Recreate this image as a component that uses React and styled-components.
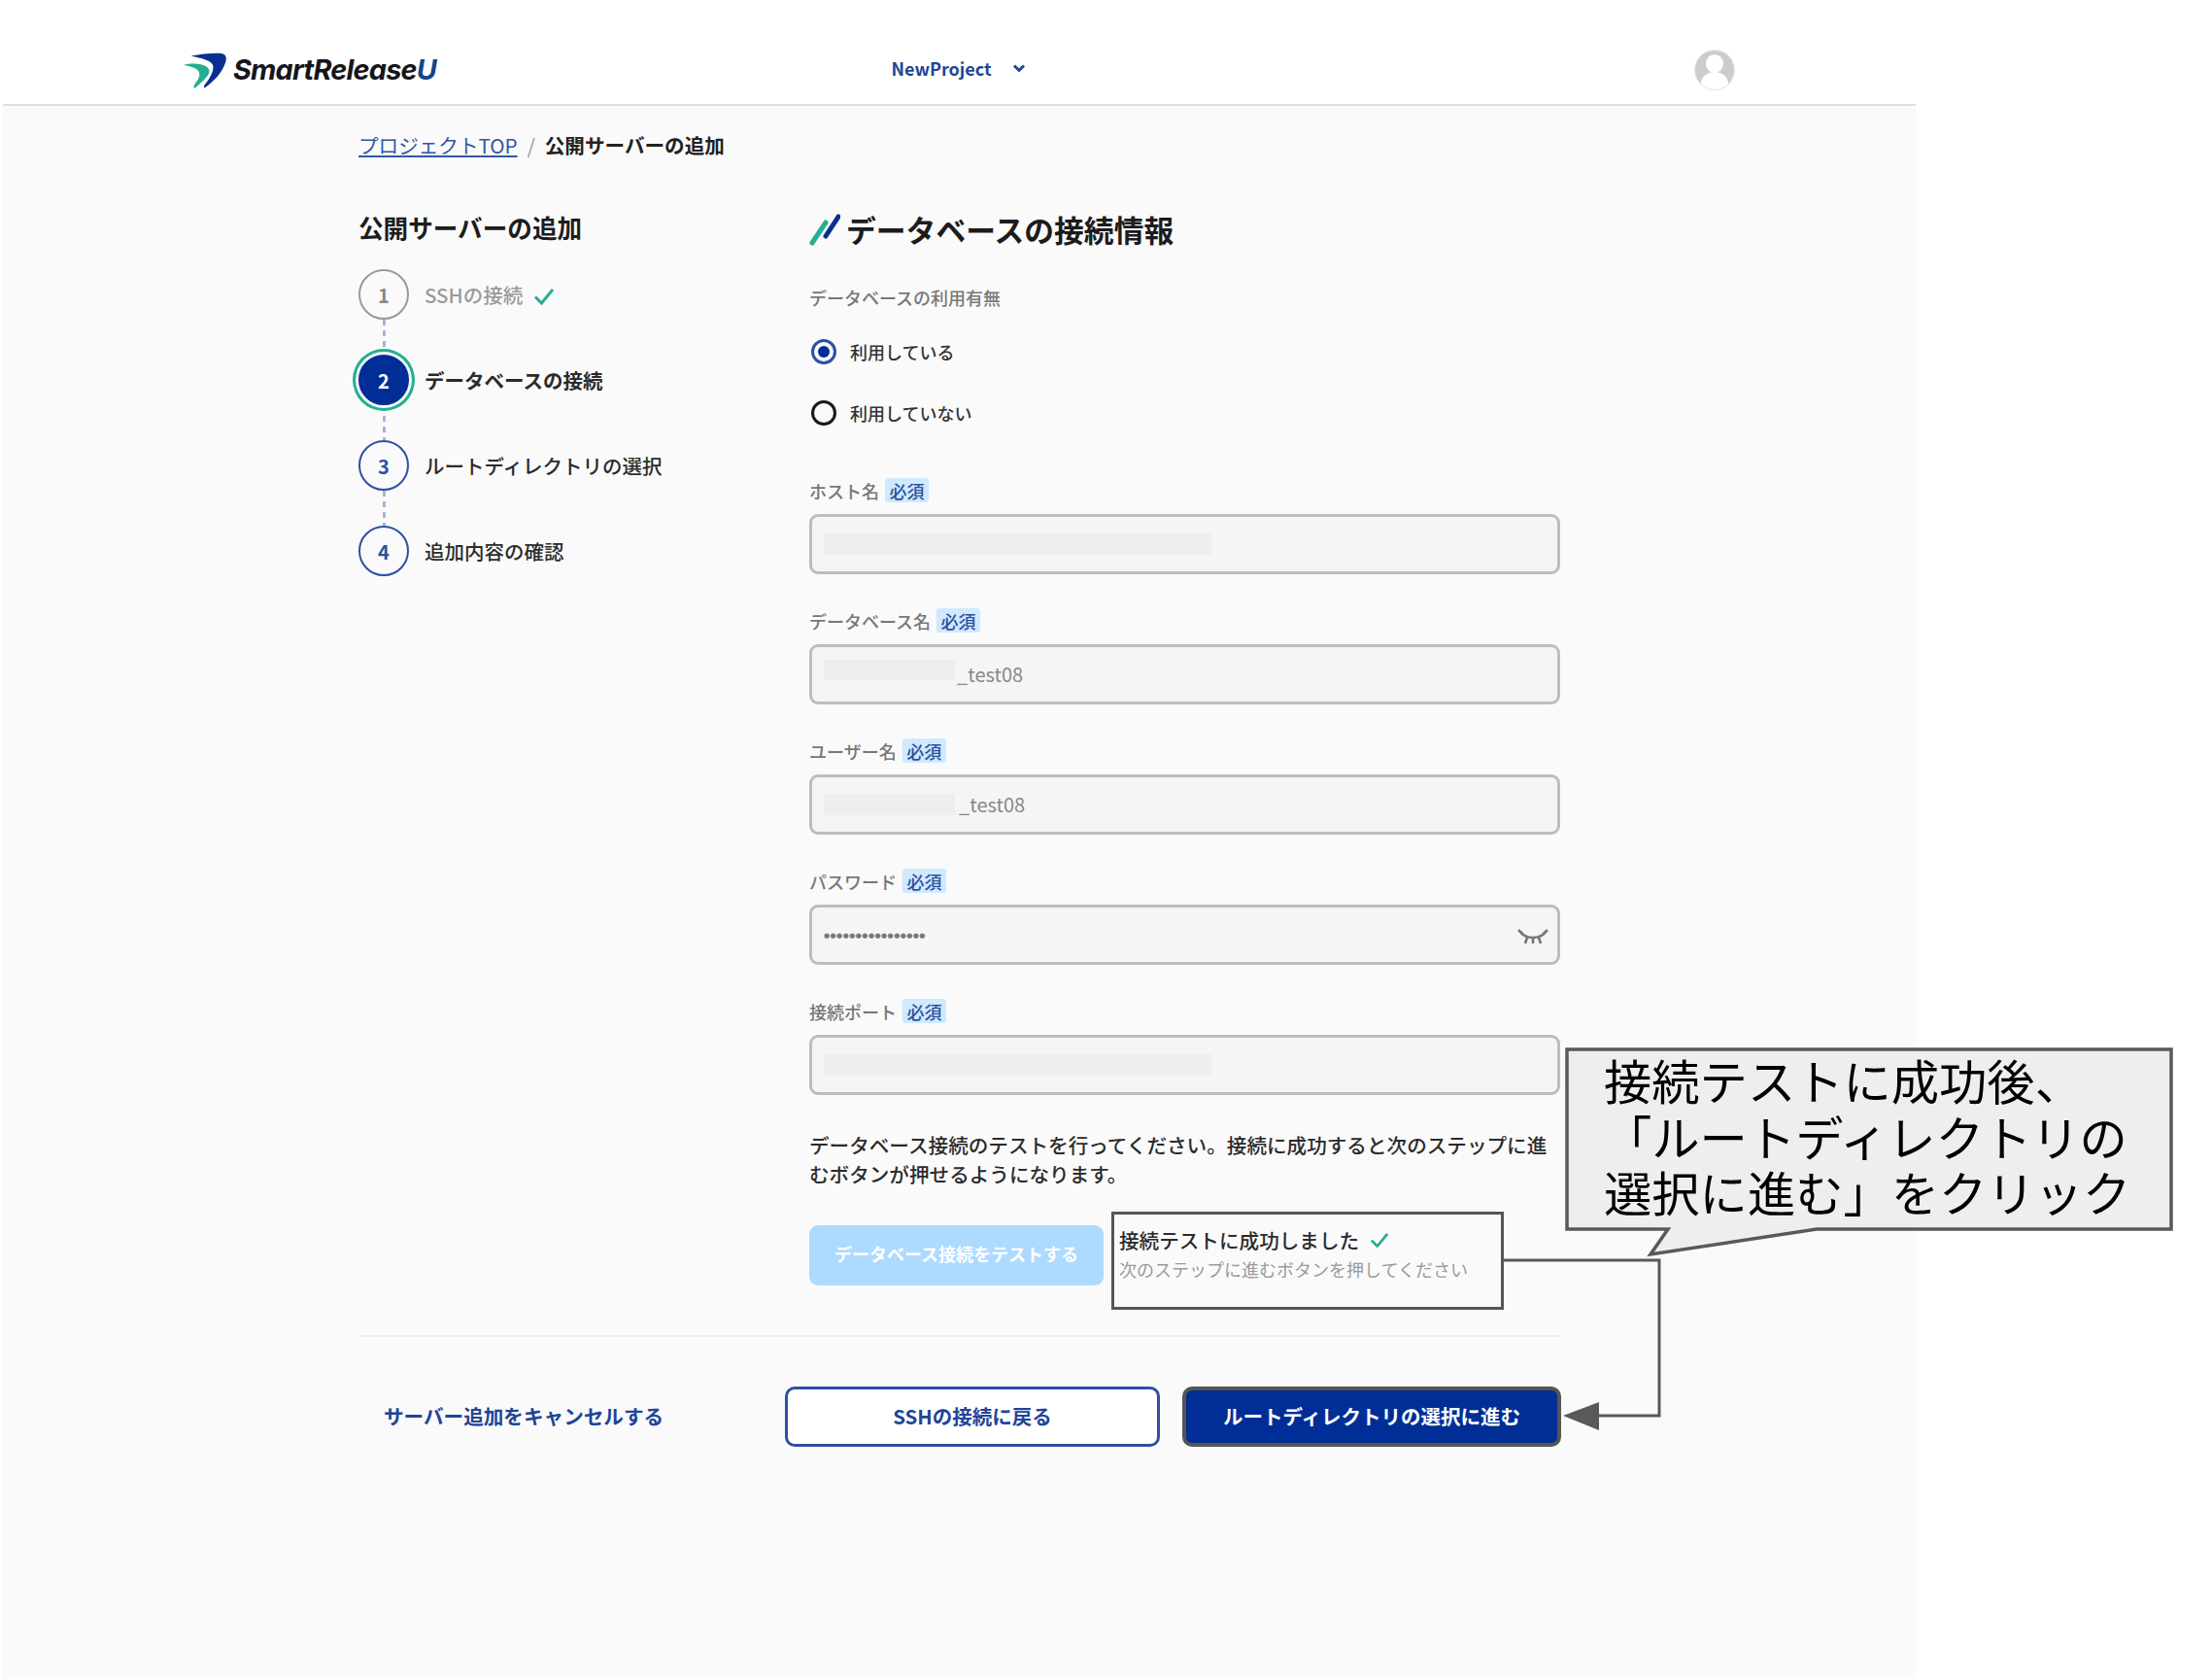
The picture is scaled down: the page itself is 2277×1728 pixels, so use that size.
import React from "react";
import styled, { createGlobalStyle } from "styled-components";

const Global = createGlobalStyle`
  html, body { margin: 0; padding: 0; background: #fff; }
  body { font-family: "Noto Sans CJK JP", "Noto Sans", sans-serif; color: #222; }
  * { box-sizing: border-box; }
`;

const Canvas = styled.div`
  position: relative;
  width: 2277px;
  height: 1728px;
  overflow: hidden;
  background: #fff;
`;
const Shell = styled.div`
  width: 1969px;
  height: 1728px;
  margin-left: 3px;
  background: #fafafa;
`;
const Header = styled.header`
  height: 109px;
  padding: 38px 186px 0;
  display: flex;
  align-items: center;
  background: #fff;
  border-bottom: 2px solid #dedede;
`;
const Logo = styled.div`
  display: flex;
  align-items: center;
  gap: 7px;
  width: 729px;
`;
const LogoText = styled.span`
  font-family: Inter, "Liberation Sans", sans-serif;
  font-style: italic;
  font-weight: 700;
  font-size: 28.8px;
  line-height: 1;
  letter-spacing: -0.75px;
  color: #15161a;
`;
const LogoU = styled.span`
  color: #12458f;
`;
const ProjectSelect = styled.div`
  display: flex;
  align-items: center;
  gap: 21px;
  width: 826px;
  margin-top: -5px;
  font-size: 18px;
  font-weight: 700;
  color: #1f4597;
`;
const Avatar = styled.svg`
  margin: -2px 0 0 1px;
`;
const Main = styled.main`
  width: 1238px;
  margin-left: 366px;
`;
const Breadcrumb = styled.nav`
  display: flex;
  align-items: center;
  height: 30px;
  margin-top: 25px;
  font-size: 20.6px;
  line-height: 30px;
`;
const CrumbLink = styled.a`
  color: #2f57a5;
  text-decoration: underline;
`;
const CrumbSep = styled.span`
  margin: 0 10px;
  color: #999;
`;
const CrumbNow = styled.span`
  font-weight: 700;
`;
const Columns = styled.div`
  display: grid;
  grid-template-columns: 464px 773px;
  margin-top: 52px;
`;
const SideTitle = styled.h2`
  margin: 0 0 25px;
  font-size: 25.6px;
  line-height: 36px;
  font-weight: 700;
  color: #1c1c1c;
`;
const Step = styled.div`
  display: flex;
  align-items: center;
  gap: 16px;
  height: 52px;
  font-size: 20.5px;
  font-weight: ${(p) => (p.$active ? 700 : 500)};
  color: ${(p) => (p.$done ? "#9a9a9a" : "#2b2b2b")};
`;
const StepNumber = styled.span`
  position: relative;
  z-index: 1;
  flex: none;
  width: 52px;
  height: 52px;
  display: flex;
  align-items: center;
  justify-content: center;
  border-radius: 50%;
  font-size: 20px;
  font-weight: 700;
  border: 2.5px solid ${(p) => (p.$done ? "#9a9a9a" : "#2d50a0")};
  color: ${(p) => (p.$done ? "#8a8a8a" : p.$active ? "#fff" : "#2d50a0")};
  background: ${(p) => (p.$active ? "#002e96" : "transparent")};
  ${(p) => p.$active && "border-color:#002e96; box-shadow: 0 0 0 3px #fafafa, 0 0 0 6px #25ae93;"}
`;
const StepLine = styled.div`
  width: 3px;
  height: 36px;
  margin-left: 24.5px;
  background: repeating-linear-gradient(#a9b3d3 0 6px, transparent 6px 11px);
`;
const CheckWrap = styled.span`
  display: inline-flex;
  margin-left: 11px;
  transform: translateY(2px);
`;
const FormTitle = styled.h1`
  display: flex;
  align-items: center;
  gap: 6px;
  margin: 0;
  height: 39px;
  font-size: 30.8px;
  font-weight: 700;
  color: #1c1c1c;
`;
const GroupLabel = styled.div`
  margin-top: 38px;
  font-size: 18px;
  line-height: 26px;
  font-weight: 500;
  color: #777;
`;
const RadioRow = styled.label`
  display: flex;
  align-items: center;
  gap: 14px;
  height: 30px;
  margin-top: ${(p) => p.$gap}px;
  font-size: 18px;
  font-weight: 500;
  color: #333;
`;
const RadioMark = styled.span`
  flex: none;
  width: 26px;
  height: 26px;
  margin-left: 2px;
  border-radius: 50%;
  border: 3px solid ${(p) => (p.$on ? "#2d50a0" : "#1a1a1a")};
  display: flex;
  align-items: center;
  justify-content: center;
  &::after {
    content: "";
    display: ${(p) => (p.$on ? "block" : "none")};
    width: 12px;
    height: 12px;
    border-radius: 50%;
    background: #002e96;
  }
`;
const Fields = styled.div`
  margin-top: 52px;
  display: flex;
  flex-direction: column;
  gap: 35px;
`;
const FieldLabel = styled.div`
  display: flex;
  align-items: center;
  gap: 6px;
  height: 25px;
  margin-bottom: 12px;
  font-size: 18px;
  font-weight: 500;
  color: #777;
`;
const Required = styled.span`
  width: 45px;
  height: 25px;
  display: flex;
  align-items: center;
  justify-content: center;
  border-radius: 3px;
  background: #cfe9ff;
  color: #2d50a0;
  font-size: 18px;
  font-weight: 500;
`;
const InputBox = styled.div`
  display: flex;
  align-items: center;
  height: 62px;
  padding: 0 12px;
  border: 3px solid #bdbdbd;
  border-radius: 9px;
  background: #f5f5f5;
  font-size: 20px;
  color: #888;
`;
const Blur = styled.span`
  display: block;
  flex: none;
  width: ${(p) => p.$w}px;
  height: ${(p) => p.$h || 22}px;
  background: #eeeeee;
  margin-top: ${(p) => p.$top || 0}px;
`;
const InputValue = styled.span`
  margin-left: ${(p) => p.$gap}px;
  margin-top: -2px;
`;
const Dots = styled.span`
  font-family: "DejaVu Sans", sans-serif;
  font-size: 7px;
  letter-spacing: 0.45px;
  color: #777;
  flex: 1;
  padding-top: 2px;
`;
const EyeIcon = styled.svg`
  margin: 4px -3px 0 0;
`;
const Help = styled.p`
  margin: 36px 0 0;
  font-size: 20.6px;
  line-height: 30px;
  font-weight: 500;
  color: #2b2b2b;
  width: 770px;
`;
const TestRow = styled.div`
  display: flex;
  align-items: flex-start;
  gap: 8px;
  margin-top: 24px;
`;
const TestButton = styled.button`
  width: 303px;
  height: 62px;
  margin-top: 14px;
  padding: 0 0 5px;
  border: 0;
  border-radius: 9px;
  background: #addbff;
  color: #fff;
  font: 700 18px "Noto Sans CJK JP", sans-serif;
`;
const SuccessBox = styled.div`
  width: 404px;
  height: 101px;
  padding: 12px 5px 0 5px;
  border: 3px solid #555;
`;
const SuccessTitle = styled.div`
  display: flex;
  align-items: center;
  gap: 11px;
  font-size: 20.6px;
  line-height: 28px;
  font-weight: 500;
  color: #2b2b2b;
`;
const SuccessSub = styled.div`
  font-size: 18px;
  line-height: 26px;
  margin-top: 3px;
  color: #9a9a9a;
`;
const Divider = styled.hr`
  height: 2px;
  margin: 26px 0 0;
  border: 0;
  background: #eeeeee;
`;
const Footer = styled.div`
  display: flex;
  align-items: center;
  margin-top: 51px;
  padding-left: 26px;
`;
const CancelLink = styled.a`
  margin-right: auto;
  margin-top: -2px;
  font-size: 20.6px;
  font-weight: 700;
  color: #1f4597;
`;
const FooterButton = styled.button`
  width: ${(p) => p.$w}px;
  height: 62px;
  padding: 0 0 3px;
  border-radius: 10px;
  font: 700 20.5px "Noto Sans CJK JP", sans-serif;
  margin-left: ${(p) => p.$ml}px;
  border: ${(p) => (p.$primary ? "4px solid #555" : "3px solid #2d50a0")};
  background: ${(p) => (p.$primary ? "#002e96" : "#fff")};
  color: ${(p) => (p.$primary ? "#fff" : "#1f4597")};
`;
const Annotation = styled.svg`
  position: absolute;
  left: 0;
  top: 0;
  pointer-events: none;
`;
const CalloutText = styled.div`
  position: absolute;
  left: 1651px;
  top: 1082px;
  font-size: 49.3px;
  line-height: 57.5px;
  color: #000;
  white-space: pre;
`;

const Check = ({ size = 22 }) => (
  <svg width={size} height={size * 0.82} viewBox="0 0 22 18" fill="none">
    <path d="M2 9.5 8.5 16 20 2" stroke="#25ae93" strokeWidth="3" />
  </svg>
);

const Field = ({ label, children }) => (
  <div>
    <FieldLabel>
      {label}
      <Required>必須</Required>
    </FieldLabel>
    <InputBox>{children}</InputBox>
  </div>
);

export default function App() {
  return (
    <Canvas>
      <Global />
      <Shell>
        <Header>
          <Logo>
            <svg width="44" height="37" viewBox="57 70 133 110">
              <path d="M80 80C110 74 150 70 175 72C188 74 192 84 188 98C176 135 150 160 122 180C120 176 120 174 122 170C142 145 152 125 148 108C142 94 115 88 80 80Z" fill="#0a2f93" />
              <path d="M57 108C80 102 110 102 128 113C140 122 140 132 128 146C116 160 104 170 92 180C88 178 88 174 90 170C104 152 110 140 104 128C96 116 80 112 57 108Z" fill="#25ae93" />
            </svg>
            <LogoText>
              SmartRelease<LogoU>U</LogoU>
            </LogoText>
          </Logo>
          <ProjectSelect>
            NewProject
            <svg width="14" height="10" viewBox="0 0 14 10" fill="none">
              <path d="M2 2.5 7 7.5 12 2.5" stroke="#1f4597" strokeWidth="3" />
            </svg>
          </ProjectSelect>
          <Avatar width="42" height="42" viewBox="0 0 42 42">
            <defs>
              <clipPath id="avatarClip">
                <circle cx="21" cy="21" r="20" />
              </clipPath>
            </defs>
            <circle cx="21" cy="21" r="21" fill="#e8e8e8" />
            <circle cx="21" cy="21" r="20" fill="#cccccc" />
            <g clipPath="url(#avatarClip)" fill="#fff">
              <ellipse cx="21" cy="14.5" rx="9" ry="9.5" />
              <ellipse cx="21" cy="35" rx="14" ry="12" />
            </g>
          </Avatar>
        </Header>
        <Main>
          <Breadcrumb>
            <CrumbLink>プロジェクトTOP</CrumbLink>
            <CrumbSep>/</CrumbSep>
            <CrumbNow>公開サーバーの追加</CrumbNow>
          </Breadcrumb>
          <Columns>
            <aside>
              <SideTitle>公開サーバーの追加</SideTitle>
              <Step $done>
                <StepNumber $done>1</StepNumber>
                <span>
                  SSHの接続
                  <CheckWrap>
                    <Check />
                  </CheckWrap>
                </span>
              </Step>
              <StepLine />
              <Step $active>
                <StepNumber $active>2</StepNumber>
                データベースの接続
              </Step>
              <StepLine />
              <Step>
                <StepNumber>3</StepNumber>
                ルートディレクトリの選択
              </Step>
              <StepLine />
              <Step>
                <StepNumber>4</StepNumber>
                追加内容の確認
              </Step>
            </aside>
            <section>
              <FormTitle>
                <svg width="32" height="34" viewBox="0 0 32 34" fill="none">
                  <path d="M3 31 17 10" stroke="#25ae93" strokeWidth="5" strokeLinecap="round" />
                  <path d="M17 24 30 4" stroke="#0a2f93" strokeWidth="5" strokeLinecap="round" />
                </svg>
                データベースの接続情報
              </FormTitle>
              <GroupLabel>データベースの利用有無</GroupLabel>
              <RadioRow $gap={28}>
                <RadioMark $on />
                利用している
              </RadioRow>
              <RadioRow $gap={33}>
                <RadioMark />
                利用していない
              </RadioRow>
              <Fields>
                <Field label="ホスト名">
                  <Blur $w={399} />
                </Field>
                <Field label="データベース名">
                  <Blur $w={135} $h={21} $top={-10} />
                  <InputValue $gap={2}>_test08</InputValue>
                </Field>
                <Field label="ユーザー名">
                  <Blur $w={135} $h={22} $top={-1} />
                  <InputValue $gap={4}>_test08</InputValue>
                </Field>
                <Field label="パスワード">
                  <Dots>●●●●●●●●●●●●●●●●</Dots>
                  <EyeIcon width="32" height="17" viewBox="0 0 32 17" fill="none" stroke="#777" strokeWidth="2.6">
                    <path d="M3 3C9 11 23 11 29 3" />
                    <path d="M1 1 6 6M31 1 26 6M10 9 8 15M22 9 24 15M16 10V15" />
                  </EyeIcon>
                </Field>
                <Field label="接続ポート">
                  <Blur $w={399} />
                </Field>
              </Fields>
              <Help>データベース接続のテストを行ってください。接続に成功すると次のステップに進むボタンが押せるようになります。</Help>
              <TestRow>
                <TestButton>データベース接続をテストする</TestButton>
                <SuccessBox>
                  <SuccessTitle>
                    接続テストに成功しました
                    <Check size={20} />
                  </SuccessTitle>
                  <SuccessSub>次のステップに進むボタンを押してください</SuccessSub>
                </SuccessBox>
              </TestRow>
            </section>
          </Columns>
          <Divider />
          <Footer>
            <CancelLink>サーバー追加をキャンセルする</CancelLink>
            <FooterButton $w={386}>SSHの接続に戻る</FooterButton>
            <FooterButton $w={390} $ml={23} $primary>
              ルートディレクトリの選択に進む
            </FooterButton>
          </Footer>
        </Main>
      </Shell>
      <Annotation width="2277" height="1728" viewBox="0 0 2277 1728" fill="none">
        <path d="M1548 1297H1708V1457H1640" stroke="#595959" strokeWidth="3" />
        <path d="M1609 1457 1646 1443V1472Z" fill="#595959" />
        <path d="M1613 1080H2235V1265H1870L1699 1291 1717 1265H1613Z" fill="#eeeeee" stroke="#595959" strokeWidth="3.5" />
      </Annotation>
      <CalloutText>{"接続テストに成功後、\n「ルートディレクトリの\n選択に進む」をクリック"}</CalloutText>
    </Canvas>
  );
}
